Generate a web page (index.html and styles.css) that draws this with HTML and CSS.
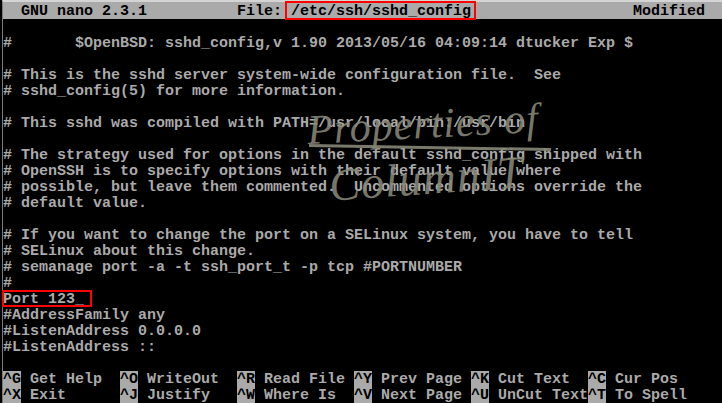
FILE: index.html
```html
<!DOCTYPE html>
<html lang="en">
<head>
    <meta charset="UTF-8">
    <meta name="viewport" content="width=device-width, initial-scale=1.0">
    <title>GNU nano 2.3.1 - sshd_config</title>
    <link rel="stylesheet" href="styles.css">
</head>
<body>
    <div class="screen">
        <div class="row title">  GNU nano 2.3.1          File: /etc/ssh/sshd_config                  Modified  </div>
        <div class="row"></div>
        <div class="row">#       $OpenBSD: sshd_config,v 1.90 2013/05/16 04:09:14 dtucker Exp $</div>
        <div class="row"></div>
        <div class="row"># This is the sshd server system-wide configuration file.  See</div>
        <div class="row"># sshd_config(5) for more information.</div>
        <div class="row"></div>
        <div class="row"># This sshd was compiled with PATH=/usr/local/bin:/usr/bin</div>
        <div class="row"></div>
        <div class="row"># The strategy used for options in the default sshd_config shipped with</div>
        <div class="row"># OpenSSH is to specify options with their default value where</div>
        <div class="row"># possible, but leave them commented.  Uncommented options override the</div>
        <div class="row"># default value.</div>
        <div class="row"></div>
        <div class="row"># If you want to change the port on a SELinux system, you have to tell</div>
        <div class="row"># SELinux about this change.</div>
        <div class="row"># semanage port -a -t ssh_port_t -p tcp #PORTNUMBER</div>
        <div class="row">#</div>
        <div class="row">Port 123_</div>
        <div class="row">#AddressFamily any</div>
        <div class="row">#ListenAddress 0.0.0.0</div>
        <div class="row">#ListenAddress ::</div>
        <div class="row"></div>

        <!-- shortcut lines -->
        <div class="row keys">
            <div class="key"><span class="cap">^G</span> Get Help</div>
            <div class="key"><span class="cap">^O</span> WriteOut</div>
            <div class="key"><span class="cap">^R</span> Read File</div>
            <div class="key"><span class="cap">^Y</span> Prev Page</div>
            <div class="key"><span class="cap">^K</span> Cut Text</div>
            <div class="key"><span class="cap">^C</span> Cur Pos</div>
        </div>
        <div class="row keys">
            <div class="key"><span class="cap">^X</span> Exit</div>
            <div class="key"><span class="cap">^J</span> Justify</div>
            <div class="key"><span class="cap">^W</span> Where Is</div>
            <div class="key"><span class="cap">^V</span> Next Page</div>
            <div class="key"><span class="cap">^U</span> UnCut Text</div>
            <div class="key"><span class="cap">^T</span> To Spell</div>
        </div>

        <!-- watermark over the text -->
        <div class="stamp stamp-top">Properties of</div>
        <div class="stamp-line"></div>
        <div class="stamp stamp-bottom">ColumnIT</div>

        <!-- highlight boxes -->
        <div class="mark mark-file"></div>
        <div class="mark mark-port"></div>
    </div>
</body>
</html>
```

FILE: styles.css
```css
* {
    box-sizing: border-box;
    margin: 0;
    padding: 0;
}

html,
body {
    background-color: #000;
    width: 722px;
    height: 403px;
    overflow: hidden;
}

.screen {
    position: relative;
    height: 403px;
    margin-left: 2px;
    border-left: 1px solid #7a7a7a;
    border-top: 2px solid #d4d4d4;
    font-family: 'Liberation Mono', 'DejaVu Sans Mono', monospace;
    font-size: 15px;
    font-weight: bold;
    color: #aaaaaa;
}

.row {
    height: 16px;
    line-height: 18px;
    white-space: pre;
}

.title {
    height: 17px;
    line-height: 19px;
    background-color: #aaaaaa;
    color: #000;
    width: 720px;
}

.keys {
    display: flex;
}

.key {
    width: 117px;
    white-space: pre;
}

.cap {
    background-color: #aaaaaa;
    color: #000;
}

.stamp {
    position: absolute;
    font-family: 'Liberation Serif', serif;
    font-style: italic;
    font-weight: normal;
    color: rgba(135, 135, 120, 0.9);
    white-space: nowrap;
}

.stamp-top {
    left: 304px;
    top: 98px;
    font-size: 42px;
    letter-spacing: 1px;
    transform: rotate(-3deg);
}

.stamp-line {
    position: absolute;
    left: 306px;
    top: 144px;
    width: 242px;
    height: 3px;
    background-color: rgba(135, 135, 120, 0.9);
    transform: rotate(1deg);
}

.stamp-bottom {
    left: 326px;
    top: 150px;
    font-size: 46px;
    letter-spacing: 1px;
    transform: rotate(-4deg);
}

.mark {
    position: absolute;
    border: 2px solid #ff0000;
}

.mark-file {
    left: 282px;
    top: -1px;
    width: 191px;
    height: 19px;
}

.mark-port {
    left: -1px;
    top: 288px;
    width: 90px;
    height: 17px;
}
```
